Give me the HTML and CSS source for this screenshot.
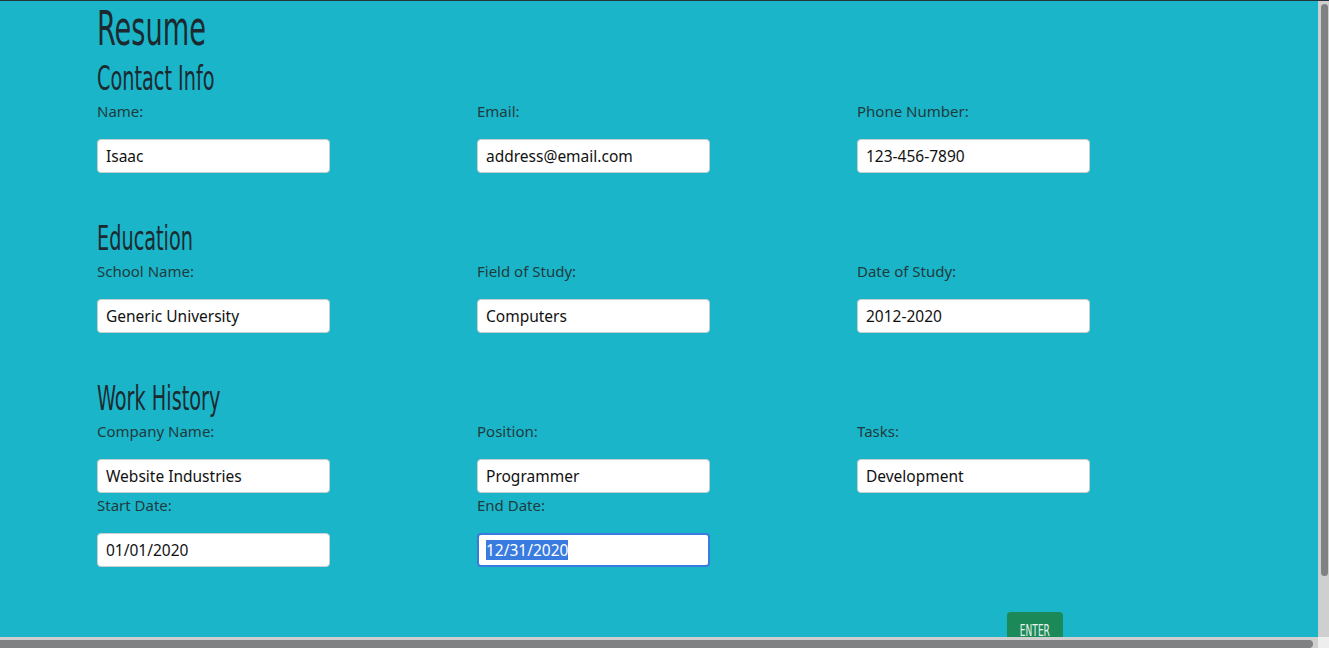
FILE: index.html
```html
<!DOCTYPE html>
<html>
<head>
<meta charset="utf-8">
<link rel="stylesheet" href="styles.css">
</head>
<body>
<div class="viewport">
  <main class="resume">
    <h1 class="title"><span>Resume</span></h1>

    <section class="group">
      <h2 class="heading"><span>Contact Info</span></h2>
      <div class="fields">
        <div class="field"><label>Name:</label><input type="text" value="Isaac"></div>
        <div class="field"><label>Email:</label><input type="text" value="address@email.com"></div>
        <div class="field"><label>Phone Number:</label><input type="text" value="123-456-7890"></div>
      </div>
    </section>

    <section class="group">
      <h2 class="heading"><span>Education</span></h2>
      <div class="fields">
        <div class="field"><label>School Name:</label><input type="text" value="Generic University"></div>
        <div class="field"><label>Field of Study:</label><input type="text" value="Computers"></div>
        <div class="field"><label>Date of Study:</label><input type="text" value="2012-2020"></div>
      </div>
    </section>

    <section class="group">
      <h2 class="heading"><span>Work History</span></h2>
      <div class="fields">
        <div class="field"><label>Company Name:</label><input type="text" value="Website Industries"></div>
        <div class="field"><label>Position:</label><input type="text" value="Programmer"></div>
        <div class="field"><label>Tasks:</label><input type="text" value="Development"></div>
        <div class="field"><label>Start Date:</label><input type="text" value="01/01/2020"></div>
        <div class="field"><label>End Date:</label><div class="input focused"><span class="selected">12/31/2020</span></div></div>
      </div>
    </section>

    <div class="actions">
      <button class="enter"><span>ENTER</span></button>
    </div>
  </main>
  <div class="vscroll"><div class="vthumb"></div></div>
  <div class="hscroll"><div class="hthumb"></div></div>
  <div class="corner"></div>
</div>
</body>
</html>
```

FILE: styles.css
```css
html, body {
  margin: 0;
  padding: 0;
  height: 100%;
  overflow: hidden;
}
body {
  background: #1bb5c9;
  font-family: "Noto Sans", "Open Sans", sans-serif;
}
.viewport {
  position: relative;
  height: 648px;
  border-top: 1px solid #24343a;
  box-sizing: border-box;
  overflow: hidden;
}
.resume {
  padding-left: 97px;
}
.title, .heading {
  margin: 0;
  font-family: "Liberation Sans Narrow", "DejaVu Sans Condensed", sans-serif;
  font-weight: normal;
  color: #1c2a30;
}
.title span, .heading span {
  display: inline-block;
  transform: scaleX(0.63);
  transform-origin: left center;
  white-space: nowrap;
}
.title {
  font-size: 48px;
  height: 55px;
  line-height: 55px;
}
.heading {
  font-size: 34px;
  height: 44px;
  line-height: 44px;
}
.group + .group .heading {
  margin-top: 43px;
}
.fields {
  display: grid;
  grid-template-columns: repeat(3, 380px);
  row-gap: 1px;
}
.field {
  display: flex;
  flex-direction: column;
  align-items: flex-start;
}
.field label {
  font-size: 15px;
  line-height: 22px;
  color: #1f3b3e;
  margin-bottom: 17px;
}
.field input, .field .input {
  box-sizing: border-box;
  width: 233px;
  height: 34px;
  border: 1px solid #c9cfd1;
  border-radius: 4px;
  background: #fff;
  padding: 0 8px;
  font-family: "Noto Sans", "Open Sans", sans-serif;
  font-size: 15.5px;
  color: #111;
  outline: none;
  margin: 0;
}
.field .input {
  display: flex;
  align-items: center;
}
.field .input.focused {
  border: 2px solid #3a7be0;
  padding: 0 7px;
}
.selected {
  background: #3a7be0;
  color: #fff;
  line-height: 20px;
}
.actions {
  display: flex;
  padding-left: 910px;
  margin-top: 45px;
}
.enter {
  width: 56px;
  height: 36px;
  border: none;
  border-radius: 4px;
  background: #1b8a58;
  color: #e8f4ee;
  font-family: "Liberation Sans Narrow", "DejaVu Sans Condensed", sans-serif;
  font-size: 16px;
  padding: 0;
  display: flex;
  justify-content: center;
  align-items: center;
}
.enter span {
  display: inline-block;
  transform: scaleX(0.63);
}
.vscroll {
  position: absolute;
  top: -1px;
  right: 0;
  width: 11px;
  height: 637px;
  background: #cfcfcf;
}
.vthumb {
  margin: 4px 1px 0 3px;
  height: 572px;
  background: #7f8182;
  border-radius: 4px;
}
.hscroll {
  position: absolute;
  left: 0;
  bottom: 0;
  width: 1318px;
  height: 11px;
  background: #cfcfcf;
}
.hthumb {
  margin: 3px 0 0 0;
  width: 1313px;
  height: 8px;
  background: #7f8182;
  border-radius: 0 4px 4px 0;
}
.corner {
  position: absolute;
  right: 0;
  bottom: 0;
  width: 11px;
  height: 11px;
  background: #eeeeee;
}
```
